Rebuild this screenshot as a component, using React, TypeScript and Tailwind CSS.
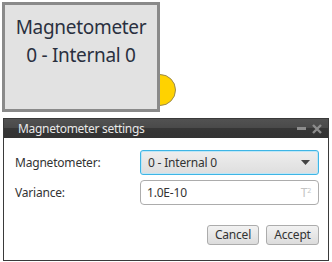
import React from "react";

export default function App() {
  const font = { fontFamily: '"Noto Sans", "Open Sans", sans-serif' };
  return (
    <div className="relative w-[332px] h-[262px] bg-white overflow-hidden" style={font}>
      {/* node port */}
      <div className="absolute left-[144px] top-[74px] w-[32px] h-[32px] rounded-full bg-[#ffd200] border border-[#9a8a50]" />
      {/* node */}
      <div className="absolute left-[2px] top-[2px] w-[158px] h-[110px] border-[3px] border-[#8a8a8a] bg-[#e2e2e2] flex flex-col items-center pt-[8px] text-[19px] tracking-[-0.3px] leading-[28px] text-[#2a3040]">
        <div>Magnetometer</div>
        <div>0 - Internal 0</div>
      </div>
      {/* dialog */}
      <div className="absolute left-[3px] top-[118px] w-[326px] h-[143px] border border-[#3a3a3a] bg-white flex flex-col">
        <div className="h-[19px] flex items-center justify-between bg-[linear-gradient(#525252_0%,#4a4a4a_45%,#363636_50%,#333333_100%)] pl-[14px] pr-[6px]">
          <span className="text-[12px] tracking-[-0.3px] text-[#e8e8e8] leading-none">Magnetometer settings</span>
          <div className="flex items-center gap-[6px]">
            <div className="w-[9px] h-[3px] bg-[#8c8c8c]" />
            <svg width="10" height="10" viewBox="0 0 10 10">
              <path d="M1 1 L9 9 M9 1 L1 9" stroke="#8c8c8c" strokeWidth="2.4" />
            </svg>
          </div>
        </div>
        <div className="flex flex-col pl-[11px] pr-[9px] pt-[12px] text-[12px] tracking-[-0.2px] text-[#333]">
          <div className="flex items-center h-[25px]">
            <span className="w-[125px]">Magnetometer:</span>
            <div className="flex-1 h-[25px] rounded-[3px] border border-[#3eb5e5] bg-[linear-gradient(#eeeeee,#dedede)] flex items-center justify-between pl-[7px] pr-[8px] shadow-[inset_0_0_0_1px_#bfe6f6]">
              <span>0 - Internal 0</span>
              <svg width="9" height="5" viewBox="0 0 9 5"><path d="M0 0 H9 L4.5 5 Z" fill="#444" /></svg>
            </div>
          </div>
          <div className="flex items-center h-[25px] mt-[5px]">
            <span className="w-[125px]">Variance:</span>
            <div className="flex-1 h-[25px] rounded-[4px] border border-[#acacac] bg-white flex items-center justify-between pl-[6px] pr-[7px]">
              <span>1.0E-10</span>
              <span className="text-[12px] text-[#c4c4c4] leading-none">T<sup className="text-[7px]">2</sup></span>
            </div>
          </div>
          <div className="flex justify-end gap-[7px] mt-[20px]">
            <button className="w-[52px] h-[20px] rounded-[3px] border border-[#acacac] bg-[linear-gradient(#f2f2f2,#dcdcdc)] leading-none">Cancel</button>
            <button className="w-[53px] h-[20px] rounded-[3px] border border-[#acacac] bg-[linear-gradient(#f2f2f2,#dcdcdc)] leading-none">Accept</button>
          </div>
        </div>
      </div>
    </div>
  );
}
